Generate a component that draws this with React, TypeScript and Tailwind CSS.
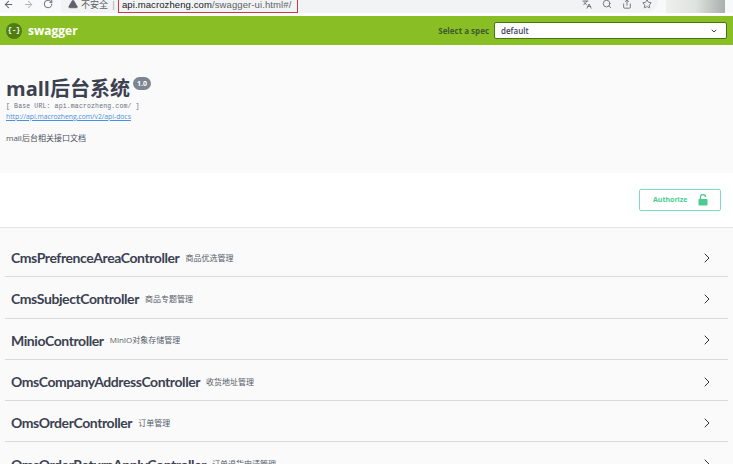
import { ArrowLeft, ArrowRight, RotateCw, TriangleAlert, Search, Share, Star, Languages, ChevronRight, ChevronDown } from 'lucide-react';

const controllers = [
  { name: 'CmsPrefrenceAreaController', desc: '商品优选管理' },
  { name: 'CmsSubjectController', desc: '商品专题管理' },
  { name: 'MinioController', desc: 'MinIO对象存储管理' },
  { name: 'OmsCompanyAddressController', desc: '收货地址管理' },
  { name: 'OmsOrderController', desc: '订单管理' },
  { name: 'OmsOrderReturnApplyController', desc: '订单退货申请管理' },
];

function BrowserBar() {
  return (
    <div className="h-[16px] shrink-0 bg-white flex items-start overflow-hidden">
      <div className="h-[13px] w-full flex items-center bg-[#f8f9fa]">
        <ArrowLeft className="w-[11px] h-[11px] ml-[3px] -mt-[5px] text-[#5f6368]" strokeWidth={2.2} />
        <ArrowRight className="w-[11px] h-[11px] ml-[9px] -mt-[5px] text-[#b5b7ba]" strokeWidth={2.2} />
        <RotateCw className="w-[10px] h-[10px] ml-[9px] -mt-[5px] text-[#5f6368]" strokeWidth={2.2} />
        <div className="ml-[8px] w-[597px] h-[13px] bg-[#f1f3f4] rounded-br-full flex items-center pl-[7px]">
          <TriangleAlert className="w-[10px] h-[10px] -mt-[5px] text-[#5f6368] fill-[#5f6368]" />
          <span className="ml-[3px] text-[9px] leading-[9px] -mt-[4px] text-[#5f6368] font-['Noto_Sans_CJK_SC',sans-serif]">不安全</span>
          <span className="ml-[3px] text-[9px] leading-[9px] -mt-[4px] text-[#9aa0a6]">|</span>
          <div className="ml-[2px] h-[13px] w-[180px] border border-[#d0393f] border-t-0 flex items-start pl-[3px]">
            <span className="text-[9.5px] leading-[10px] font-['Liberation_Sans',sans-serif] text-[#202124] tracking-[0.1px]">
              api.macrozheng.com<span className="text-[#5f6368]">/swagger-ui.html#/</span>
            </span>
          </div>
          <div className="ml-auto mr-[6px] -mt-[5px] flex items-center gap-[10px] text-[#5f6368]">
            <Languages className="w-[10px] h-[10px]" />
            <Search className="w-[10px] h-[10px]" />
            <Share className="w-[10px] h-[10px]" />
            <Star className="w-[10px] h-[10px]" />
          </div>
        </div>
        <div className="ml-[8px] w-[59px] h-[13px] bg-gradient-to-r from-[#eef0ee] via-[#dfe3df] to-[#a9afad]" />
      </div>
    </div>
  );
}

function Topbar() {
  return (
    <div className="h-[29px] shrink-0 bg-[#89bf24] flex items-center pl-[6px] pr-[6px]">
      <div className="w-[16px] h-[16px] rounded-full bg-[#4f7d14] flex items-center justify-center text-white text-[7px] font-bold font-['Liberation_Mono',monospace]">
        {'{-}'}
      </div>
      <span className="ml-[6px] text-white text-[12px] font-bold font-['Open_Sans',sans-serif]">swagger</span>
      <span className="ml-auto text-[8px] font-bold text-[#3f5a2f] font-['Open_Sans',sans-serif]">Select a spec</span>
      <div className="ml-[5px] w-[233px] h-[17px] bg-white rounded-[2px] border border-[#41790f] flex items-center pl-[6px] pr-[8px]">
        <span className="text-[8px] font-semibold text-[#3b4151] font-['Open_Sans',sans-serif]">default</span>
        <ChevronDown className="ml-auto w-[8px] h-[8px] text-[#3b4151]" strokeWidth={3} />
      </div>
    </div>
  );
}

function Info() {
  return (
    <div className="h-[128px] shrink-0 bg-[#fafafa] pl-[6px] pt-[29px]">
      <div className="flex items-start h-[28px]">
        <h1 className="text-[20px] leading-[30px] font-bold text-[#3b4151] font-['Open_Sans','Noto_Sans_CJK_SC',sans-serif]">mall后台系统</h1>
        <span className="ml-[3px] mt-[3px] h-[13px] px-[4px] rounded-full bg-[#7d8492] text-white text-[7px] leading-[13px] font-bold font-['Open_Sans',sans-serif]">1.0</span>
      </div>
      <div className="text-[6.5px] leading-[9px] text-[#6b7080] font-['Liberation_Mono',monospace] tracking-[0.15px]">[ Base URL: api.macrozheng.com/ ]</div>
      <a className="block mt-[1px] text-[6.8px] leading-[10px] text-[#4990e2] underline font-['Open_Sans',sans-serif]">http://api.macrozheng.com/v2/api-docs</a>
      <p className="mt-[10px] text-[8px] leading-[12px] text-[#4b5160] font-['Open_Sans','Noto_Sans_CJK_SC',sans-serif]">mall后台相关接口文档</p>
    </div>
  );
}

function AuthSection() {
  return (
    <div className="h-[55px] shrink-0 bg-white flex items-center justify-end pr-[12px] border-b border-[#e3e3e3]">
      <button className="w-[82px] h-[22px] border border-[#7fdcb8] rounded-[2px] flex items-center pl-[13px]">
        <span className="text-[7px] font-bold text-[#49cc90] font-['Open_Sans',sans-serif]">Authorize</span>
        <svg className="ml-[11px]" width="10" height="12" viewBox="0 0 10 12">
          <path d="M2.5 5.5V3a2.5 2.5 0 0 1 5 0" fill="none" stroke="#49cc90" strokeWidth="1.3" />
          <rect x="0.5" y="5" width="9" height="6.5" rx="0.8" fill="#49cc90" />
        </svg>
      </button>
    </div>
  );
}

function Row({ name, desc }: { name: string; desc: string }) {
  return (
    <div className="h-[41.3px] mx-[5px] pl-[6px] pr-[13px] pt-[3px] border-b border-[#d8dade] flex items-center shrink-0">
      <span className="text-[14px] font-bold tracking-[-0.42px] text-[#3b4151] font-['Lato',sans-serif]">{name}</span>
      <span className="ml-[6px] text-[8px] text-[#555b69] font-['Open_Sans','Noto_Sans_CJK_SC',sans-serif]">{desc}</span>
      <ChevronRight className="ml-auto w-[16px] h-[16px] text-[#333]" strokeWidth={1.5} />
    </div>
  );
}

export default function App() {
  return (
    <div className="w-[733px] h-[464px] overflow-hidden bg-[#fafafa] flex flex-col">
      <BrowserBar />
      <Topbar />
      <Info />
      <AuthSection />
      <div className="pt-[8px] flex flex-col">
        {controllers.map((c) => (
          <Row key={c.name} name={c.name} desc={c.desc} />
        ))}
      </div>
    </div>
  );
}
